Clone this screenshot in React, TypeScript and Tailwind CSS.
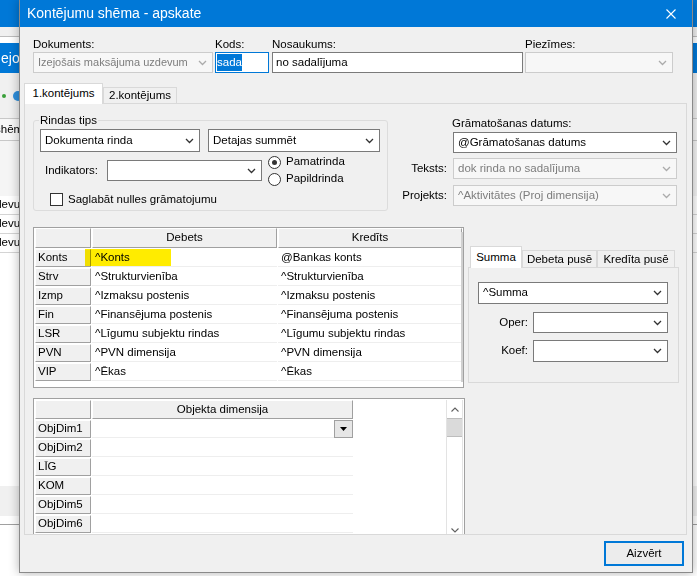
import React from "react"

const Chevron = ({ light }: { light?: boolean }) => (
    <svg width="9" height="6" viewBox="0 0 9 6" className="shrink-0">
        <path d="M1 1 L4.5 4.5 L8 1" fill="none" stroke={light ? "#ababab" : "#333333"} strokeWidth="1.3" />
    </svg>
)

type ComboProps = { text?: string; size: string; disabled?: boolean; tight?: boolean }

function Combo({ text = "", size, disabled, tight }: ComboProps) {
    return (
        <div className={`${size} flex items-center gap-[3px] border pl-[4px] pr-[5px] ${disabled ? "border-[#cccccc] bg-[#f7f7f7] text-[#7d7d7d]" : "border-[#7a7a7a] bg-white text-black"}`}>
            <span className={`min-w-0 flex-1 overflow-hidden whitespace-nowrap ${tight ? "text-[11px]" : ""}`}>{text}</span>
            <Chevron light={disabled} />
        </div>
    )
}

const hdrCell = "flex items-center bg-[#f0f0f0] border border-white border-r-[#a0a0a0] border-b-[#a0a0a0]"

const rows1 = [
    ["Konts", "^Konts", "@Bankas konts"],
    ["Strv", "^Strukturvienība", "^Strukturvienība"],
    ["Izmp", "^Izmaksu postenis", "^Izmaksu postenis"],
    ["Fin", "^Finansējuma postenis", "^Finansējuma postenis"],
    ["LSR", "^Līgumu subjektu rindas", "^Līgumu subjektu rindas"],
    ["PVN", "^PVN dimensija", "^PVN dimensija"],
    ["VIP", "^Ēkas", "^Ēkas"],
]

const rows2 = ["ObjDim1", "ObjDim2", "LĪG", "KOM", "ObjDim5", "ObjDim6"]

function BackgroundApp() {
    return (
        <div className="flex h-full flex-col bg-white">
            <div className="h-[27px] shrink-0 bg-[#0078d7]" />
            <div className="h-[9px] shrink-0 bg-[#f0f0f0]" />
            <div className="h-[7px] shrink-0 border-t border-[#bdbdbd] bg-white" />
            <div className="flex h-[30px] shrink-0 items-center bg-[#0078d7] pl-[1px] text-[14px] text-white">ejoš</div>
            <div className="flex h-[45px] shrink-0 items-center gap-[7px] bg-[#f0f0f0] pl-[2px]">
                <span className="h-[4px] w-[4px] rounded-full bg-[#3aa03a]" />
                <span className="h-[10px] w-[10px] rounded-full bg-[#2f8fdc]" />
            </div>
            <div className="flex h-[23px] shrink-0 items-center border-y border-[#c8c8c8] bg-[#f7f7f7]">
                <span className="-ml-[5px]">shēmā</span>
            </div>
            <div className="h-[55px] shrink-0 bg-[#f5f5f5]" />
            {["uzdevum", "uzdevum", "uzdevum"].map((t, i) => (
                <div key={i} className="flex h-[19px] shrink-0 items-center border-b border-[#d4d4d4] bg-white">
                    <span className="-ml-[17px]">{t}</span>
                </div>
            ))}
            <div className="h-[233px] shrink-0 bg-white" />
            <div className="h-[30px] shrink-0 bg-[#f0f0f0]" />
            <div className="h-[9px] shrink-0 border-b border-[#a0a0a0] bg-white" />
            <div className="flex-1 bg-white" />
        </div>
    )
}

function Tab({ label, active, size }: { label: string; active?: boolean; size: string }) {
    return (
        <div className={`${size} flex items-center justify-center border-x border-t border-[#d9d9d9] ${active ? "relative z-10 bg-white" : "bg-[#f0f0f0]"}`}>
            {label}
        </div>
    )
}

function Grid1() {
    return (
        <div className="relative flex h-[161px] w-[431px] shrink-0 flex-col gap-[1px] border border-[#a0a0a0] bg-white pl-[1px]">
            <div className="flex h-[20px] gap-[1px]">
                <div className={`${hdrCell} w-[56px]`} />
                <div className={`${hdrCell} w-[185px] justify-center`}>Debets</div>
                <div className={`${hdrCell} w-[184px] justify-center`}>Kredīts</div>
            </div>
            {rows1.map(([k, d, c]) => (
                <div key={k} className="flex h-[18px] gap-[1px]">
                    <div className={`${hdrCell} w-[56px] pl-[2px]`}>{k}</div>
                    <div className="flex w-[185px] items-center border-b border-[#eeeeee] pl-[3px]">{d}</div>
                    <div className="flex w-[184px] items-center border-b border-[#eeeeee] pl-[3px]">{c}</div>
                </div>
            ))}
            <span className="absolute left-[51px] top-[21px] h-[17px] w-[86px] bg-[#ffec00] mix-blend-multiply" />
            <span className="absolute right-0 top-[4px] h-[150px] w-[2px] bg-[#d0d0d0]" />
        </div>
    )
}

function Grid2() {
    return (
        <div className="flex h-[142px] w-[432px] shrink-0 border border-[#a0a0a0] bg-white pl-[1px] pt-[1px]">
            <div className="flex w-[318px] flex-col gap-[1px]">
                <div className="flex h-[19px] gap-[1px]">
                    <div className={`${hdrCell} w-[56px]`} />
                    <div className={`${hdrCell} w-[261px] justify-center`}>Objekta dimensija</div>
                </div>
                {rows2.map((r, i) => (
                    <div key={r} className="flex h-[18px] gap-[1px]">
                        <div className={`${hdrCell} w-[56px] pl-[2px]`}>{r}</div>
                        <div className="flex w-[261px] items-center justify-end border-b border-[#eeeeee]">
                            {i === 0 && (
                                <div className="flex h-[18px] w-[19px] items-center justify-center border border-[#a0a0a0] bg-[#e6e6e6]">
                                    <svg width="7" height="4" viewBox="0 0 7 4">
                                        <path d="M0 0 L7 0 L3.5 4 Z" fill="#000" />
                                    </svg>
                                </div>
                            )}
                        </div>
                    </div>
                ))}
            </div>
            <div className="w-[93px] bg-white" />
            <div className="flex w-[17px] flex-col border-x border-[#e3e3e3] bg-white">
                <div className="flex h-[18px] items-center justify-center">
                    <svg width="8" height="5" viewBox="0 0 8 5">
                        <path d="M0.5 4.5 L4 1 L7.5 4.5" fill="none" stroke="#606060" strokeWidth="1.1" />
                    </svg>
                </div>
                <div className="h-[19px] border-y border-[#bdbdbd] bg-[#dadada]" />
                <div className="flex-1" />
                <div className="flex h-[18px] items-center justify-center">
                    <svg width="8" height="5" viewBox="0 0 8 5">
                        <path d="M0.5 0.5 L4 4 L7.5 0.5" fill="none" stroke="#606060" strokeWidth="1.1" />
                    </svg>
                </div>
            </div>
        </div>
    )
}

function Radio({ label, checked }: { label: string; checked?: boolean }) {
    return (
        <div className="flex h-[13px] items-center gap-[5px]">
            <span className="flex h-[13px] w-[13px] items-center justify-center rounded-full border border-[#333333] bg-white">
                {checked && <span className="h-[5px] w-[5px] rounded-full bg-[#333333]" />}
            </span>
            <span>{label}</span>
        </div>
    )
}

export default function App() {
    return (
        <div className="relative h-[576px] w-[697px] overflow-hidden font-['Liberation_Sans',Arial,sans-serif] text-[11.5px] text-black">
            <BackgroundApp />
            <div className="absolute left-[19px] top-0 flex h-[573px] w-[674px] flex-col border-x border-b border-[#8a8a8a] bg-[#f0f0f0] shadow-[0_0_10px_rgba(0,0,0,0.3)]">
                <div className="flex h-[27px] shrink-0 items-center justify-between bg-[#0078d7] pl-[7px] pr-[16px] text-[14px] text-white">
                    <span>Kontējumu shēma - apskate</span>
                    <svg width="10" height="10" viewBox="0 0 10 10">
                        <path d="M0.5 0.5 L9.5 9.5 M9.5 0.5 L0.5 9.5" stroke="#ffffff" strokeWidth="1.1" />
                    </svg>
                </div>

                <div className="flex pl-[13px] pt-[10px]">
                    <div className="flex w-[180px] flex-col">
                        <span className="h-[15px] leading-[14px]">Dokuments:</span>
                        <Combo size="h-[21px]" text="Izejošais maksājuma uzdevum" disabled tight />
                    </div>
                    <div className="ml-[2px] flex w-[54px] flex-col">
                        <span className="h-[15px] leading-[14px]">Kods:</span>
                        <div className="flex h-[21px] items-center border border-[#0078d7] bg-white pl-[1px]">
                            <span className="bg-[#0078d7] text-white">sada</span>
                        </div>
                    </div>
                    <div className="ml-[3px] flex w-[251px] flex-col">
                        <span className="h-[15px] leading-[14px]">Nosaukums:</span>
                        <div className="flex h-[21px] items-center border border-[#7a7a7a] bg-white pl-[3px]">no sadalījuma</div>
                    </div>
                    <div className="ml-[2px] flex w-[148px] flex-col">
                        <span className="h-[15px] leading-[14px]">Piezīmes:</span>
                        <Combo size="h-[21px]" disabled />
                    </div>
                </div>

                <div className="ml-[4px] mt-[10px] flex h-[21px] items-end">
                    <Tab label="1.kontējums" active size="h-[21px] w-[79px]" />
                    <Tab label="2.kontējums" size="h-[17px] w-[74px]" />
                </div>

                <div className="-mt-px ml-[4px] flex h-[432px] w-[663px] flex-col overflow-hidden border border-[#d9d9d9] bg-[#f0f0f0]">
                    <div className="flex">
                        <fieldset className="ml-[8px] mt-[9px] h-[98px] w-[355px] rounded-[3px] border border-[#dcdcdc] px-[6px]">
                            <legend className="-ml-[1px] px-[1px] leading-[14px]">Rindas tips</legend>
                            <div className="mt-[2px] flex gap-[8px]">
                                <Combo size="h-[23px] w-[160px]" text="Dokumenta rinda" />
                                <Combo size="h-[23px] w-[172px]" text="Detajas summēt" />
                            </div>
                            <div className="mt-[3px] flex h-[31px] items-center">
                                <span className="ml-[5px] w-[62px]">Indikators:</span>
                                <Combo size="h-[21px] w-[155px]" />
                                <div className="ml-[6px] flex flex-col gap-[4px]">
                                    <Radio label="Pamatrinda" checked />
                                    <Radio label="Papildrinda" />
                                </div>
                            </div>
                            <div className="ml-[10px] mt-[5px] flex items-center gap-[5px]">
                                <span className="h-[13px] w-[13px] border border-[#333333] bg-white" />
                                <span>Saglabāt nulles grāmatojumu</span>
                            </div>
                        </fieldset>

                        <div className="ml-[10px] mt-[12px] flex w-[280px] flex-col">
                            <span className="ml-[54px] leading-[14px]">Grāmatošanas datums:</span>
                            <div className="ml-[55px] mt-[2px]">
                                <Combo size="h-[21px] w-[224px]" text="@Grāmatošanas datums" />
                            </div>
                            <div className="mt-[5px] flex items-center">
                                <span className="w-[49px] text-right">Teksts:</span>
                                <div className="ml-[6px]">
                                    <Combo size="h-[21px] w-[224px]" text="dok rinda no sadalījuma" disabled />
                                </div>
                            </div>
                            <div className="mt-[6px] flex items-center">
                                <span className="w-[49px] text-right">Projekts:</span>
                                <div className="ml-[6px]">
                                    <Combo size="h-[21px] w-[224px]" text="^Aktivitātes (Proj dimensija)" disabled />
                                </div>
                            </div>
                        </div>
                    </div>

                    <div className="mt-[16px] flex">
                        <div className="ml-[8px]">
                            <Grid1 />
                        </div>
                        <div className="ml-[4px] mt-[19px] flex w-[211px] flex-col">
                            <div className="flex h-[22px] items-end pl-[2px]">
                                <Tab label="Summa" active size="h-[22px] w-[52px]" />
                                <Tab label="Debeta pusē" size="h-[18px] w-[75px]" />
                                <Tab label="Kredīta pusē" size="h-[18px] w-[78px]" />
                            </div>
                            <div className="-mt-px flex h-[116px] flex-col border border-[#d9d9d9] bg-[#f0f0f0]">
                                <div className="ml-[9px] mt-[14px]">
                                    <Combo size="h-[22px] w-[190px]" text="^Summa" />
                                </div>
                                <div className="mt-[8px] flex items-center">
                                    <span className="w-[59px] text-right">Oper:</span>
                                    <div className="ml-[5px]">
                                        <Combo size="h-[21px] w-[135px]" />
                                    </div>
                                </div>
                                <div className="mt-[7px] flex items-center">
                                    <span className="w-[59px] text-right">Koef:</span>
                                    <div className="ml-[5px]">
                                        <Combo size="h-[22px] w-[135px]" />
                                    </div>
                                </div>
                            </div>
                        </div>
                    </div>

                    <div className="ml-[8px] mt-[10px]">
                        <Grid2 />
                    </div>
                </div>

                <div className="mt-[6px] flex justify-end pr-[8px]">
                    <div className="flex h-[25px] w-[80px] items-center justify-center border border-[#0078d7] bg-[#ececec] shadow-[inset_0_0_0_1px_#0078d7]">
                        Aizvērt
                    </div>
                </div>
            </div>
        </div>
    )
}
